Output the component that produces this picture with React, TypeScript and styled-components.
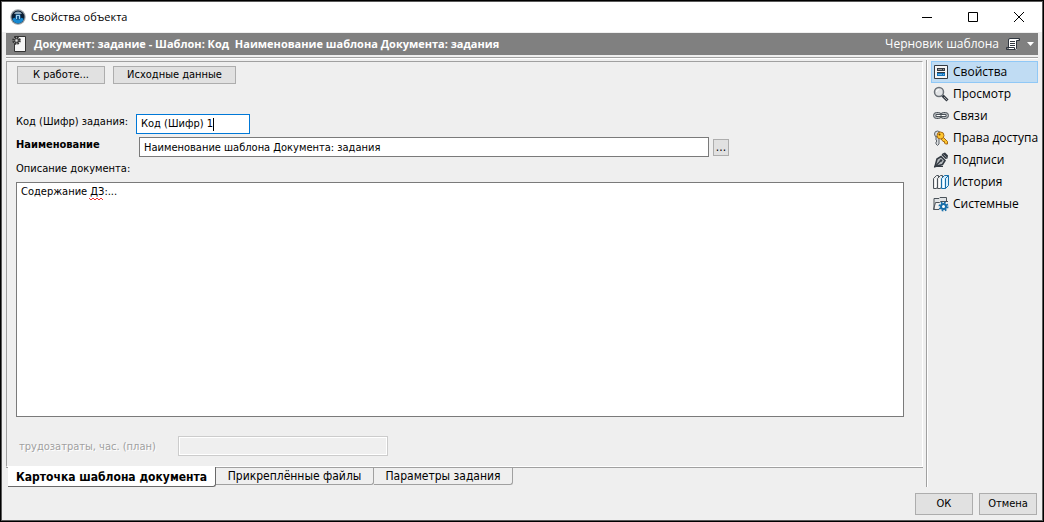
import React from "react";
import styled, { createGlobalStyle, css } from "styled-components";

const tahoma = `"DejaVu Sans Condensed", "DejaVu Sans", sans-serif`;
const segoe = `"Open Sans", "Noto Sans", sans-serif`;

const GlobalStyle = createGlobalStyle`
  * { box-sizing: border-box; }
  body { margin: 0; background: #efefef; }
  button, input, textarea { margin: 0; font: inherit; color: inherit; border-radius: 0; outline: none; }
  svg { display: block; flex: none; }
`;

const Window = styled.div`
  display: flex;
  flex-direction: column;
  min-height: 100vh;
  border: 1px solid #000;
  background: #efefef;
  color: #000;
  font: 11px/14px ${tahoma};
`;

const Frame = styled.div`
  flex: 1;
  display: flex;
  flex-direction: column;
  border: 1px solid #5a5a5a;
`;

const TitleBar = styled.header`
  display: flex;
  align-items: center;
  height: 30px;
  padding-left: 8px;
  background: #fff;
  font: 11px/16px ${segoe};
`;

const Title = styled.h1`
  flex: 1;
  margin: 0 0 0 5px;
  font: inherit;
`;

const CaptionButton = styled.button`
  display: flex;
  align-items: center;
  justify-content: center;
  width: 46px;
  height: 30px;
  padding: 0;
  border: 0;
  background: none;
`;

const ObjectBar = styled.div`
  display: flex;
  align-items: center;
  height: 22px;
  margin: 1px 4px 0;
  padding: 0 4px 0 6px;
  background: #808080;
  color: #fff;
  font: 12px/16px ${segoe};
`;

const ObjectTitle = styled.h2`
  flex: 1;
  margin: 0 0 0 8px;
  font-size: 11px;
  line-height: 16px;
  font-weight: 700;
  white-space: pre;
`;

const StateButton = styled.button`
  display: flex;
  align-items: center;
  gap: 6px;
  padding: 0;
  border: 0;
  background: none;
`;

const Groove = styled.div`
  height: 2px;
  margin: 2px 4px 1px;
  border-top: 1px solid #a0a0a0;
  border-bottom: 1px solid #fff;
`;

const Body = styled.div`
  flex: 1;
  display: flex;
  padding: 0 4px;
`;

const Main = styled.main`
  flex: 1;
  min-width: 0;
  display: flex;
  flex-direction: column;
  margin-right: 3px;
`;

const Card = styled.section`
  flex: 1;
  display: flex;
  flex-direction: column;
  margin-top: 1px;
  padding: 4px 18px 10px 9px;
  border: 1px solid #a0a0a0;
  border-right-color: #fff;
  border-bottom-color: #fff;
`;

const Sidebar = styled.nav`
  display: flex;
  flex-direction: column;
  width: 112px;
  padding: 1px 0 0 4px;
  border-left: 1px solid #a0a0a0;
  box-shadow: inset 1px 0 #fff;
  font: 12px/16px ${segoe};
`;

const NavItem = styled.button<{ $active?: boolean }>`
  display: flex;
  align-items: center;
  gap: 4px;
  height: 22px;
  padding: 0 0 0 1px;
  border: 1px solid transparent;
  background: none;
  white-space: nowrap;
  ${(p) => p.$active && css`
    border-color: #90c8f6;
    background: #c0dcf3;
  `}
`;

const PushButton = styled.button<{ $width: number }>`
  width: ${(p) => p.$width}px;
  height: ${(p) => (p.$width < 60 ? 22 : 18)}px;
  padding: 0;
  border: 1px solid #adadad;
  background: #e1e1e1;
  line-height: 14px;
`;

const Actions = styled.div`
  display: flex;
  gap: 8px;
  padding-left: 1px;
  margin-bottom: 30px;
`;

const Row = styled.div<{ $height: number }>`
  display: flex;
  align-items: center;
  height: ${(p) => p.$height}px;
`;

const Label = styled.label<{ $width?: number; $bold?: boolean }>`
  width: ${(p) => (p.$width ? p.$width + "px" : "auto")};
  flex: none;
  padding-bottom: 4px;
  font-weight: ${(p) => (p.$bold ? 700 : 400)};
  white-space: nowrap;
`;

const FocusedField = styled.div`
  display: flex;
  align-items: center;
  width: 114px;
  height: 20px;
  padding-left: 4px;
  border: 1px solid #0078d7;
  background: #fff;
`;

const BareInput = styled.input`
  field-sizing: content;
  padding: 0;
  border: 0;
  background: none;
`;

const Caret = styled.span`
  width: 1px;
  height: 13px;
  background: #000;
`;

const NameInput = styled.input`
  flex: 1;
  min-width: 0;
  height: 20px;
  padding: 0 4px;
  border: 1px solid #7a7a7a;
  background: #fff;
`;

const NameGroup = styled.div`
  flex: 1;
  display: flex;
  align-items: center;
  gap: 4px;
  margin-right: 175px;
`;

const MoreButton = styled.button`
  width: 16px;
  height: 17px;
  padding: 0;
  border: 1px solid #adadad;
  background: #e1e1e1;
  font-size: 12px;
  line-height: 14px;
`;

const TextWrap = styled.div`
  position: relative;
  flex: 1;
  display: flex;
  min-height: 80px;
`;

const Description = styled.textarea`
  flex: 1;
  padding: 2px 4px;
  border: 1px solid #7a7a7a;
  background: #fff;
  resize: none;
`;

const Squiggle = styled.svg`
  position: absolute;
  left: 73px;
  top: 15px;
`;

const DisabledRow = styled.div`
  display: flex;
  align-items: center;
  height: 20px;
  margin-top: 19px;
  padding-left: 3px;
  color: #a0a0a0;
  text-shadow: 1px 1px #fff;
`;

const DisabledLabel = styled.label`
  width: 159px;
  padding-top: 2px;
`;

const DisabledInput = styled.input`
  width: 210px;
  height: 20px;
  border: 1px solid #ccc;
  background: #efefef;
  box-shadow: inset -1px -1px #fff, inset 1px 1px #fff;
`;

const Tabs = styled.div`
  display: flex;
  align-items: flex-start;
  height: 20px;
  padding-left: 2px;
  border-top: 1px solid #a0a0a0;
  font-size: 12px;
`;

const Tab = styled.button<{ $active?: boolean; $width: number }>`
  width: ${(p) => p.$width}px;
  height: 17px;
  padding: 0;
  border: 0 solid #a0a0a0;
  border-width: 0 1px 1px 0;
  border-bottom-right-radius: 3px;
  background: none;
  line-height: 16px;
  white-space: nowrap;
  ${(p) => p.$active && css`
    height: 20px;
    margin-top: -1px;
    border-color: #696969;
    background: #fff;
    font-weight: 700;
    line-height: 20px;
  `}
`;

const Footer = styled.footer`
  display: flex;
  justify-content: flex-end;
  gap: 6px;
  padding: 6px 5px 5px;
`;

const AppIcon = () => (
  <svg width="16" height="16" viewBox="0 0 16 16">
    <circle cx="8" cy="8" r="7.700" fill="#9aa1a6" />
    <circle cx="8" cy="8" r="6.500" fill="#0b1e33" />
    <path d="M2.500 9.500a5.500 5 0 0 0 11 0c-2-1.500-9-1.500-11 0z" fill="#1689d1" />
    <path d="M4 4.500a5.200 5.200 0 0 1 8 0c-2 1.500-6 1.500-8 0z" fill="#8ba6ba" />
    <circle cx="8" cy="8" r="3" fill="#16568a" />
    <path d="M6.500 6v4M9.500 6v4M6.500 6.500h3" stroke="#9fd0ef" fill="none" />
  </svg>
);

const DocIcon = () => (
  <svg width="14" height="16" viewBox="0 0 14 16">
    <path d="M2.500.500h11v15h-11z" fill="#f6f6f6" stroke="#333" />
    <circle cx="4.500" cy="4.500" r="3.300" fill="#aaa" stroke="#333" strokeWidth="2" strokeDasharray="1.600 1" />
    <circle cx="4.500" cy="4.500" r="2.200" fill="#888" stroke="#333" />
    <circle cx="4.500" cy="4.500" r="1" fill="#ddd" />
  </svg>
);

const ScrollIcon = () => (
  <svg width="16" height="14" viewBox="0 0 16 14">
    <path d="M4 2.500Q4 1 5.500 1h8v2H12v8q0 2-1 2H4z" fill="#fff" />
    <path d="M3.500 10V3Q3.500 1.500 5 1.500h9.500v2h-3v7.500q0 1.500-1 1.500h-9v-2h8v2" fill="none" stroke="#303740" />
    <path d="M5 4.500h5M5 6.500h5M5 8.500h5" stroke="#303740" />
  </svg>
);

const PropsIcon = () => (
  <svg width="14" height="14" viewBox="0 0 14 14">
    <path d="M.500.500h13v13H.500z" fill="#f5f5f5" stroke="#343b43" />
    <path d="M3 3h8v3H3z" fill="#343b43" />
    <path d="M4 4.500h4M9 4.500h1" stroke="#999" />
    <path d="M3 7.500h8" stroke="#343b43" />
    <path d="M3 8h8v3H3z" fill="#1374bd" />
    <path d="M4 9.500h4M9 9.500h1" stroke="#6db6e8" />
  </svg>
);

const SearchIcon = () => (
  <svg width="16" height="16" viewBox="0 0 16 16">
    <path d="M9.500 9.500l5 5" stroke="#343b43" strokeWidth="3" />
    <path d="M11 11l3 3" stroke="#aaa" />
    <circle cx="6" cy="6" r="4.500" fill="#e2e4e6" stroke="#6b7177" strokeWidth="1.500" />
    <path d="M3.500 6A2.500 2.500 0 0 1 6 3.500" stroke="#fff" fill="none" />
  </svg>
);

const LinkIcon = () => (
  <svg width="16" height="16" viewBox="0 0 16 16">
    <rect x=".500" y="4.500" width="8" height="6" rx="3" fill="#b9bdc0" stroke="#4b5259" />
    <rect x="7.500" y="4.500" width="8" height="6" rx="3" fill="#b9bdc0" stroke="#4b5259" />
    <path d="M3 6.500h10v2H3z" fill="#fff" stroke="#4b5259" />
    <path d="M8 5v5" stroke="#4b5259" />
  </svg>
);

const KeyIcon = () => (
  <svg width="16" height="16" viewBox="0 0 16 16">
    <path d="M3 6h3v8l-1.500 1.500L3 14v-2l1-1-1-1z" fill="#d8dbde" stroke="#5c6369" />
    <circle cx="4.500" cy="4" r="3" fill="#d8dbde" stroke="#5c6369" />
    <path d="M7.500 8l2-1.500 5 5v2.500h-2l-1-1v-1.500H10z" fill="#ffc62e" stroke="#a66a16" />
    <circle cx="7.500" cy="5.500" r="3.500" fill="#ffc62e" stroke="#a66a16" />
    <circle cx="6.500" cy="4.500" r="1" fill="#70420c" />
  </svg>
);

const PenIcon = () => (
  <svg width="16" height="16" viewBox="0 0 16 16">
    <path d="M9.500 1.500L12 .500l3 3-.500 3-2 .500-4-4z" fill="#343b43" />
    <path d="M10.500 2.500l3 3" stroke="#8d9398" />
    <path d="M8 4.500l4 4-2.500 4L2 14.500 4 7z" fill="#b9bdc1" stroke="#343b43" strokeWidth="1.600" />
    <path d="M2 14.500L7.500 9" stroke="#343b43" strokeWidth="1.400" />
    <circle cx="8" cy="8.500" r="1.300" fill="#343b43" />
    <path d="M1 14.500h9" stroke="#343b43" />
  </svg>
);

const BooksIcon = () => (
  <svg width="16" height="16" viewBox="0 0 16 16">
    <path d="M.500 14.500v-10l3-3h2v10l-2 3z" fill="#e9eaeb" stroke="#4b5259" />
    <path d="M4.500 14.500v-10l3-3h2v10l-2 3z" fill="#e9eaeb" stroke="#4b5259" />
    <path d="M8.500 14.500v-10l3-3h4v10l-3 3z" fill="#d5edfc" stroke="#176ea9" />
    <path d="M12.500 14.500v-10l3-3" fill="none" stroke="#176ea9" />
    <path d="M2.500 5v9M6.500 5v9M10.500 5v9" stroke="#fff" />
  </svg>
);

const SystemIcon = () => (
  <svg width="16" height="16" viewBox="0 0 16 16">
    <path d="M1.500 3h5l1-1H13v3H7L6 6H2.500l-1 4z" fill="#e0e3e5" />
    <path d="M1 13.500V2.500h5l1-1h6.500v4M.500 13.500l2-7h4l1-1h7.500M.500 13.500H6" fill="none" stroke="#4b5259" />
    <circle cx="10.500" cy="10.500" r="4" fill="none" stroke="#176ea9" strokeWidth="2" strokeDasharray="1.600 1.540" />
    <circle cx="10.500" cy="10.500" r="2.500" fill="#fff" stroke="#176ea9" strokeWidth="2" />
  </svg>
);

const navItems = [
  { text: "Свойства", Icon: PropsIcon, active: true },
  { text: "Просмотр", Icon: SearchIcon },
  { text: "Связи", Icon: LinkIcon },
  { text: "Права доступа", Icon: KeyIcon },
  { text: "Подписи", Icon: PenIcon },
  { text: "История", Icon: BooksIcon },
  { text: "Системные", Icon: SystemIcon },
];

const IconSlot = styled.span`
  display: flex;
  justify-content: center;
  width: 16px;
`;

export default function App() {
  return (
    <Window>
      <GlobalStyle />
      <Frame>
        <TitleBar>
          <AppIcon />
          <Title>Свойства объекта</Title>
          <CaptionButton aria-label="Свернуть">
            <svg width="10" height="10"><path d="M0 5.500h10" stroke="#000" /></svg>
          </CaptionButton>
          <CaptionButton aria-label="Развернуть">
            <svg width="10" height="10"><path d="M.500.500h9v9h-9z" fill="none" stroke="#000" /></svg>
          </CaptionButton>
          <CaptionButton aria-label="Закрыть">
            <svg width="10" height="10"><path d="M0 0l10 10M10 0L0 10" stroke="#000" /></svg>
          </CaptionButton>
        </TitleBar>
        <ObjectBar>
          <DocIcon />
          <ObjectTitle>{"Документ: задание - Шаблон: Код  Наименование шаблона Документа: задания"}</ObjectTitle>
          <StateButton>
            <span>Черновик шаблона</span>
            <ScrollIcon />
            <svg width="7" height="4"><path d="M0 0h7L3.500 4z" fill="#fff" /></svg>
          </StateButton>
        </ObjectBar>
        <Groove />
        <Body>
          <Main>
            <Card>
              <Actions>
                <PushButton $width={88}>К работе...</PushButton>
                <PushButton $width={123}>Исходные данные</PushButton>
              </Actions>
              <Row $height={20}>
                <Label htmlFor="code" $width={120}>Код (Шифр) задания:</Label>
                <FocusedField>
                  <BareInput id="code" defaultValue="Код (Шифр) 1" />
                  <Caret />
                </FocusedField>
              </Row>
              <Row $height={26}>
                <Label htmlFor="name" $width={123} $bold>Наименование</Label>
                <NameGroup>
                  <NameInput id="name" defaultValue="Наименование шаблона Документа: задания" />
                  <MoreButton aria-label="Выбрать">...</MoreButton>
                </NameGroup>
              </Row>
              <Row $height={22}>
                <Label htmlFor="description">Описание документа:</Label>
              </Row>
              <TextWrap>
                <Description id="description" spellCheck={false} defaultValue="Содержание ДЗ:..." />
                <Squiggle width="14" height="4">
                  <path d="M0 1l2 2 2-2 2 2 2-2 2 2 2-2 2 2" fill="none" stroke="#e33" />
                </Squiggle>
              </TextWrap>
              <DisabledRow>
                <DisabledLabel htmlFor="effort">трудозатраты, час. (план)</DisabledLabel>
                <DisabledInput id="effort" disabled />
              </DisabledRow>
            </Card>
            <Tabs role="tablist">
              <Tab role="tab" aria-selected $active $width={208}>Карточка шаблона документа</Tab>
              <Tab role="tab" $width={158}>Прикреплённые файлы</Tab>
              <Tab role="tab" $width={139}>Параметры задания</Tab>
            </Tabs>
          </Main>
          <Sidebar>
            {navItems.map(({ text, Icon, active }) => (
              <NavItem key={text} $active={active}>
                <IconSlot><Icon /></IconSlot>
                {text}
              </NavItem>
            ))}
          </Sidebar>
        </Body>
        <Footer>
          <PushButton $width={58}>ОК</PushButton>
          <PushButton $width={58}>Отмена</PushButton>
        </Footer>
      </Frame>
    </Window>
  );
}
